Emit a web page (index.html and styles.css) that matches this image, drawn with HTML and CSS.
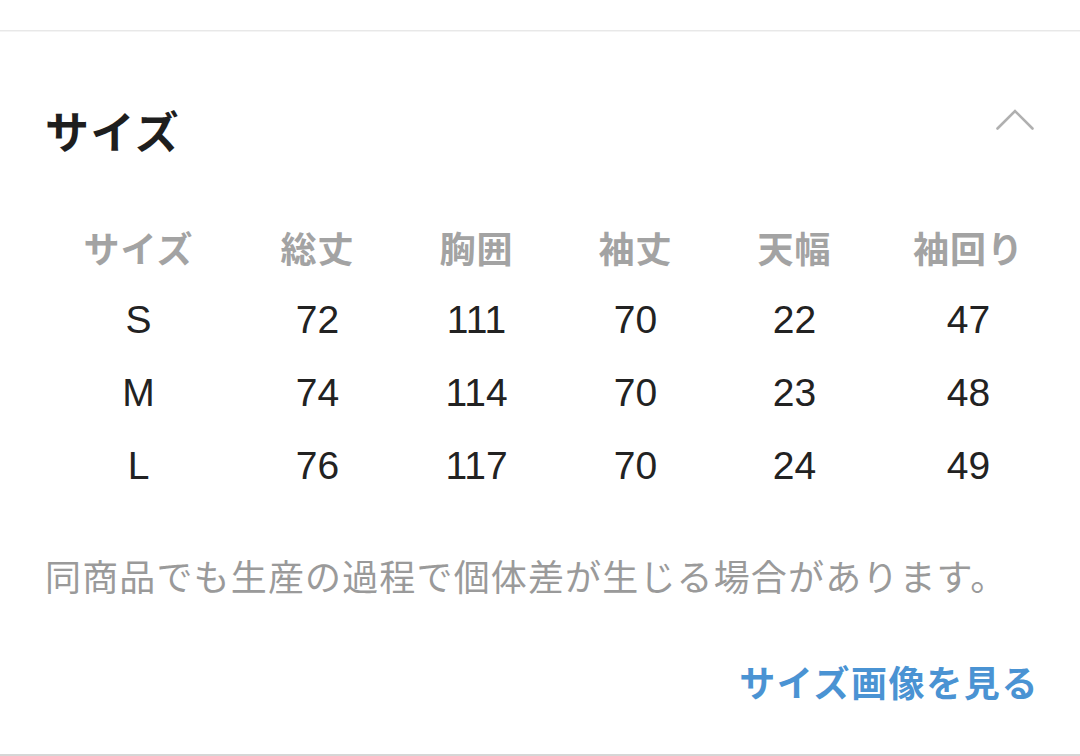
FILE: index.html
```html
<!DOCTYPE html>
<html lang="ja">
<head>
<meta charset="utf-8">
<link rel="stylesheet" href="styles.css">
</head>
<body>
<div class="topbar"></div>
<section class="panel">
  <div class="panel-head">
    <h2 class="panel-title">サイズ</h2>
    <svg class="chevron" width="38" height="22" viewBox="0 0 38 22">
      <polyline points="1.5,19.5 19,2 36.5,19.5" fill="none" stroke="#b0b0b0" stroke-width="2.6" stroke-linecap="round" stroke-linejoin="miter"/>
    </svg>
  </div>
  <div class="size-table">
    <div class="th">サイズ</div><div class="th">総丈</div><div class="th">胸囲</div><div class="th">袖丈</div><div class="th">天幅</div><div class="th">袖回り</div>
    <div class="td">S</div><div class="td">72</div><div class="td">111</div><div class="td">70</div><div class="td">22</div><div class="td">47</div>
    <div class="td">M</div><div class="td">74</div><div class="td">114</div><div class="td">70</div><div class="td">23</div><div class="td">48</div>
    <div class="td">L</div><div class="td">76</div><div class="td">117</div><div class="td">70</div><div class="td">24</div><div class="td">49</div>
  </div>
  <p class="note">同商品でも生産の過程で個体差が生じる場合があります。</p>
  <div class="link-row"><a class="size-link">サイズ画像を見る</a></div>
</section>
</body>
</html>
```

FILE: styles.css
```css
html, body {
  margin: 0;
  padding: 0;
  background: #ffffff;
}
body {
  width: 1080px;
  height: 756px;
  overflow: hidden;
  font-family: "Noto Sans CJK JP", "Noto Sans", sans-serif;
}
.topbar {
  height: 30px;
  border-bottom: 1px solid #e8e8e8;
  box-shadow: 0 1px 0 #f4f4f4;
}
.panel {
  height: 723px;
  padding: 0 45px;
  border-bottom: 2px solid #d6d6d6;
  display: flex;
  flex-direction: column;
}
.panel-head {
  display: flex;
  justify-content: space-between;
  align-items: center;
  margin-top: 77px;
  height: 44px;
}
.panel-title {
  margin: 0;
  font-size: 44px;
  line-height: 44px;
  font-weight: 700;
  letter-spacing: 1.5px;
  color: #1e1e1e;
}
.chevron {
  margin-right: 1px;
  margin-top: -20px;
}
.size-table {
  margin: 58px -6px 0 -6px;
  display: grid;
  grid-template-columns: 199px 159px 159px 159px 159px 189px;
  grid-auto-rows: 73px;
  align-items: center;
  text-align: center;
}
.th {
  font-size: 36px;
  line-height: 40px;
  font-weight: 700;
  letter-spacing: 1px;
  color: #a3a3a3;
}
.td {
  font-family: "Liberation Sans", "Noto Sans CJK JP", sans-serif;
  font-size: 39px;
  line-height: 40px;
  color: #222222;
}
.note {
  margin: 53px 0 0 0;
  font-size: 36px;
  line-height: 40px;
  letter-spacing: 1.15px;
  color: #9a9a9a;
  white-space: nowrap;
}
.link-row {
  display: flex;
  justify-content: flex-end;
  margin-top: 66px;
}
.size-link {
  font-size: 36px;
  line-height: 40px;
  font-weight: 700;
  letter-spacing: 1.6px;
  margin-right: -4px;
  color: #4a93d3;
}
```
